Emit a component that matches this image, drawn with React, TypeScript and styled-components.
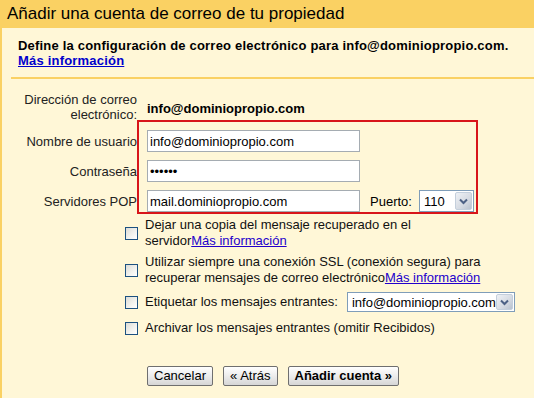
import React from "react";
import styled, { createGlobalStyle } from "styled-components";

const Global = createGlobalStyle`
  html, body { margin: 0; padding: 0; }
  body {
    width: 534px;
    height: 398px;
    overflow: hidden;
    background: #fff7d7;
    font-family: "Liberation Sans", Arial, sans-serif;
    font-size: 13px;
    color: #000;
  }
`;

const Page = styled.div`
  width: 534px;
  height: 398px;
  display: flex;
  flex-direction: column;
  background: #fff7d7;
`;

const Header = styled.div`
  height: 28px;
  background: #fad163;
  display: flex;
  align-items: center;
  padding-left: 7px;
  font-size: 17px;
  color: #000;
  flex-shrink: 0;
`;

const Body = styled.div`
  flex: 1;
  border-left: 2px solid #fad163;
  padding-left: 9px;
  display: flex;
  flex-direction: column;
`;

const Intro = styled.div`
  border-bottom: 2px solid #fad163;
  padding: 10px 0 9px 7px;
  font-weight: bold;
  font-size: 13px;
  line-height: 15px;
  letter-spacing: 0.2px;
`;

const IntroLink = styled.a`
  color: #0000cc;
  text-decoration: underline;
  font-weight: bold;
`;

const Form = styled.div`
  position: relative;
  margin-left: -9px;
  padding-top: 13px;
  display: grid;
  grid-template-columns: 135px auto;
  column-gap: 10px;
  row-gap: 8px;
  align-items: center;
  justify-content: start;
`;

const Label = styled.div`
  text-align: right;
  line-height: 15px;
  color: #222;
`;

const Value = styled.div`
  font-weight: bold;
  padding-top: 2px;
`;

const FieldRow = styled.div`
  display: flex;
  align-items: center;
  gap: 10px;
`;

const TextInput = styled.input`
  box-sizing: border-box;
  width: 213px;
  height: 22px;
  border: 1px solid #a5acb2;
  background: #fff;
  padding: 0 2px;
  font-family: "Liberation Sans", Arial, sans-serif;
  font-size: 13px;
  color: #000;
  outline: none;
`;

const Highlight = styled.div`
  position: absolute;
  left: 135px;
  top: 41px;
  width: 337px;
  height: 90px;
  border: 2px solid #d8151a;
  pointer-events: none;
`;

const SelectBox = styled.div<{ $w: number; $shift?: number }>`
  box-sizing: border-box;
  width: ${(p) => p.$w}px;
  height: ${(p) => (p.$w > 100 ? 20 : 22)}px;
  margin-left: ${(p) => p.$shift ?? 0}px;
  border: 1px solid #7f9db9;
  background: #fff;
  display: flex;
  align-items: center;
  justify-content: space-between;
  padding: 1px 1px 1px 4px;
  font-size: 13px;
`;

const Arrow = styled.div`
  width: 17px;
  align-self: stretch;
  box-sizing: border-box;
  border: 1px solid #c4cfdc;
  border-radius: 2px;
  background: linear-gradient(135deg, #eef1f5 0%, #d5dae2 60%, #b9c2cf 100%);
  display: flex;
  align-items: center;
  justify-content: center;
`;

const Options = styled.div`
  display: flex;
  flex-direction: column;
  padding: 5px 0 0 114px;
  gap: 5px;
`;

const OptionRow = styled.label<{ $gap?: number }>`
  display: flex;
  align-items: center;
  gap: 7px;
  margin-top: ${(p) => p.$gap ?? 0}px;
`;

const Check = styled.span`
  box-sizing: border-box;
  width: 13px;
  height: 13px;
  flex-shrink: 0;
  border: 1px solid #1c5180;
  background: linear-gradient(135deg, #dcdcd7 0%, #f3f3ef 60%, #ffffff 100%);
`;

const OptionText = styled.span`
  max-width: 340px;
  line-height: 16px;
  color: #111;
`;

const Link = styled.a`
  color: #2200cc;
  text-decoration: underline;
`;

const Buttons = styled.div`
  display: flex;
  gap: 10px;
  padding: 30px 0 0 136px;
`;

const Button = styled.button<{ $primary?: boolean }>`
  box-sizing: border-box;
  height: 20px;
  padding: 0 6px;
  border: 1px solid #6f6f6f;
  border-radius: 2px;
  background: linear-gradient(180deg, #ffffff 0%, #ececec 50%, #d6d6d6 100%);
  font-family: "Liberation Sans", Arial, sans-serif;
  font-size: 13px;
  font-weight: ${(p) => (p.$primary ? "bold" : "normal")};
  color: #000;
  line-height: 18px;
`;

const Chevron = () => (
  <svg width="9" height="7" viewBox="0 0 9 7">
    <path d="M1 1.5 L4.5 5 L8 1.5" fill="none" stroke="#4d6185" strokeWidth="2" />
  </svg>
);

export default function App() {
  return (
    <Page>
      <Global />
      <Header>Añadir una cuenta de correo de tu propiedad</Header>
      <Body>
        <Intro>
          Define la configuración de correo electrónico para info@dominiopropio.com.
          <br />
          <IntroLink href="#">Más información</IntroLink>
        </Intro>
        <Form>
          <Label>
            Dirección de correo
            <br />
            electrónico:
          </Label>
          <Value>info@dominiopropio.com</Value>
          <Label>Nombre de usuario</Label>
          <TextInput defaultValue="info@dominiopropio.com" />
          <Label>Contraseña</Label>
          <TextInput type="password" defaultValue="secret" />
          <Label>Servidores POP</Label>
          <FieldRow>
            <TextInput defaultValue="mail.dominiopropio.com" />
            <span>Puerto:</span>
            <SelectBox $w={55} $shift={-3}>
              <span>110</span>
              <Arrow>
                <Chevron />
              </Arrow>
            </SelectBox>
          </FieldRow>
          <Highlight />
        </Form>
        <Options>
          <OptionRow>
            <Check />
            <OptionText>
              Dejar una copia del mensaje recuperado en el servidor<Link href="#">Más información</Link>
            </OptionText>
          </OptionRow>
          <OptionRow>
            <Check />
            <OptionText>
              Utilizar siempre una conexión SSL (conexión segura) para recuperar mensajes de correo electrónico<Link href="#">Más información</Link>
            </OptionText>
          </OptionRow>
          <OptionRow $gap={1}>
            <Check />
            <OptionText>Etiquetar los mensajes entrantes:</OptionText>
            <SelectBox $w={168} $shift={2}>
              <span>info@dominiopropio.com</span>
              <Arrow>
                <Chevron />
              </Arrow>
            </SelectBox>
          </OptionRow>
          <OptionRow $gap={3}>
            <Check />
            <OptionText>Archivar los mensajes entrantes (omitir Recibidos)</OptionText>
          </OptionRow>
        </Options>
        <Buttons>
          <Button>Cancelar</Button>
          <Button>« Atrás</Button>
          <Button $primary>Añadir cuenta »</Button>
        </Buttons>
      </Body>
    </Page>
  );
}
